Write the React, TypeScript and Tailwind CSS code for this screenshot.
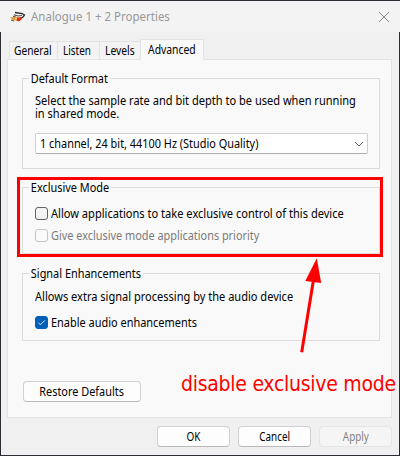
import type { ReactNode } from "react";

function Group({ title, className, titleClass, children }: { title: string; className: string; titleClass: string; children: ReactNode }) {
  return (
    <section className={`relative w-[358px] border border-[#dcdcdc] ${className}`}>
      <h2 className={`absolute -top-[8px] left-[6px] origin-left bg-[#f9f9f9] px-[2px] leading-[16px] ${titleClass}`}>{title}</h2>
      {children}
    </section>
  );
}

function Box({ className, checked }: { className: string; checked?: boolean }) {
  return (
    <span className={`flex size-[13px] shrink-0 items-center justify-center rounded-[3px] border ${className}`}>
      {checked && (
        <svg width="9" height="9" viewBox="0 0 9 9" fill="none" stroke="#d7e8f8" strokeWidth="1">
          <path d="M1.3 4.7 3.4 6.8 7.8 2.4" />
        </svg>
      )}
    </span>
  );
}

function Button({ className, textClass, children }: { className: string; textClass: string; children: ReactNode }) {
  return (
    <button className={`flex h-[21px] items-center justify-center rounded-[4px] border ${className}`}>
      <span className={textClass}>{children}</span>
    </button>
  );
}

export default function App() {
  return (
    <div className="relative flex h-[456px] w-[400px] flex-col overflow-hidden bg-[#f0f0f0] font-['Noto_Sans','Open_Sans',sans-serif] text-[12px] leading-[13px] whitespace-nowrap text-black">
      <header className="flex h-[32px] shrink-0 items-center border-t border-[#2c2a33] bg-[#f3f3f3] px-[10px]">
        <svg width="16" height="12" viewBox="0 0 16 12" fill="none">
          <path d="M5 1.5 12 2.5 14.5 4 13 6 10 8" stroke="#2d2a2a" strokeWidth="1.3" />
          <path d="M4 3.7 8 5 12 4.5" stroke="#55504c" strokeWidth="1.1" />
          <path d="M0 6.5 5 5.8 10 7 8 10 3 9Z" fill="#d79b3b" />
          <path d="M6 7 11 6 12 8 9 10.5 6 9Z" fill="#d8301f" />
          <path d="M3 5.5 6 5M1 9 4 10" stroke="#6d4a35" />
          <path d="M5 7.5 7 8" stroke="#ffe25a" strokeWidth="1.5" />
        </svg>
        <span className="ml-[5px] origin-left scale-x-[.957] text-[#999]">Analogue 1 + 2 Properties</span>
        <svg className="ml-auto" width="12" height="12" viewBox="0 0 12 12" stroke="#8a8a8a" strokeWidth="1">
          <path d="M1 1 11 11M11 1 1 11" />
        </svg>
      </header>

      <div className="flex flex-1 flex-col border-x border-b border-[#2c2a33]">
        <nav className="relative z-10 -mb-px flex h-[28px] items-end pl-[8px]">
          <span className="mb-px flex h-[18px] w-[48px] items-center border-t border-l border-[#e3e3e3] bg-[#f3f3f3] pl-[4px]">
            <span className="origin-left scale-x-[.85]">General</span>
          </span>
          <span className="mb-px flex h-[18px] w-[42px] items-center border-t border-l border-[#e3e3e3] bg-[#f3f3f3] pl-[5px]">
            <span className="origin-left scale-x-[.83]">Listen</span>
          </span>
          <span className="mb-px flex h-[18px] w-[41px] items-center border-t border-l border-[#e3e3e3] bg-[#f3f3f3] pl-[5px]">
            <span className="origin-left scale-x-[.86]">Levels</span>
          </span>
          <span className="flex h-[21px] w-[64px] items-center border-x border-t border-[#e3e3e3] bg-[#f9f9f9] pb-[2px] pl-[7px]">
            <span className="origin-left scale-x-[.865]">Advanced</span>
          </span>
        </nav>

        <main className="ml-[6px] flex h-[359px] w-[385px] flex-col border border-[#e3e3e3] bg-[#f9f9f9] pl-[14px]">
          <Group className="mt-[18px] h-[91px] pt-[15px] pl-[12px]" title="Default Format" titleClass="scale-x-[.905]">
            <p className="origin-left scale-x-[.921]">
              <span className="block">Select the sample rate and bit depth to be used when running</span>
              <span className="block">in shared mode.</span>
            </p>
            <div className="mt-[13px] flex h-[21px] w-[333px] items-center justify-between rounded-[2px] border border-[#cfcfcf] border-b-[#adadad] bg-white pr-[3px] pl-[4px]">
              <span className="origin-left scale-x-[.908]">1 channel, 24 bit, 44100 Hz (Studio Quality)</span>
              <svg width="10" height="6" viewBox="0 0 10 6" fill="none" stroke="#606060" strokeWidth="1">
                <path d="M1 1 5 5 9 1" />
              </svg>
            </div>
          </Group>

          <Group className="mt-[18px] h-[67px] pt-[19px] pl-[12px]" title="Exclusive Mode" titleClass="scale-x-[.91]">
            <label className="flex h-[13px] items-center gap-[3px]">
              <Box className="border-[#626262] bg-[#f3f3f3]" />
              <span className="origin-left scale-x-[.923]">Allow applications to take exclusive control of this device</span>
            </label>
            <label className="mt-[9px] flex h-[13px] items-center gap-[3px] text-[#7b7b7b]">
              <Box className="border-[#c5c5c5] bg-[#fafafa]" />
              <span className="origin-left scale-x-[.907]">Give exclusive mode applications priority</span>
            </label>
          </Group>

          <Group className="mt-[19px] h-[68px] pt-[16px] pl-[12px]" title="Signal Enhancements" titleClass="scale-x-[.91]">
            <p className="origin-left scale-x-[.92]">Allows extra signal processing by the audio device</p>
            <label className="mt-[13px] flex h-[13px] items-center gap-[3px]">
              <Box checked className="border-[#005fb8] bg-[#005fb8]" />
              <span className="origin-left scale-x-[.912]">Enable audio enhancements</span>
            </label>
          </Group>

          <Button className="mt-[40px] ml-px w-[118px] border-[#d0d0d0] border-b-[#b9b9b9] bg-[#fdfdfd]" textClass="scale-x-[.908]">Restore Defaults</Button>
        </main>

        <footer className="mt-[8px] flex justify-end gap-[8px] pr-[7px]">
          <Button className="w-[73px] border-[#d0d0d0] border-b-[#b9b9b9] bg-[#fdfdfd]" textClass="scale-x-[.83]">OK</Button>
          <Button className="w-[73px] border-[#d0d0d0] border-b-[#b9b9b9] bg-[#fdfdfd]" textClass="scale-x-[.82]">Cancel</Button>
          <Button className="w-[73px] border-[#e5e5e5] bg-[#f5f5f5] text-[#838383]" textClass="scale-x-[.82]">Apply</Button>
        </footer>
      </div>

      <div className="absolute top-[177px] left-[17px] z-20 h-[80px] w-[366px] border-[3px] border-[#ff0000]" />
      <svg className="absolute top-[256px] left-[295px] z-20" width="32" height="100" viewBox="0 0 32 100">
        <path d="M6.7 96.3 18.3 25" stroke="#ff0000" strokeWidth="3" />
        <path d="M21.8 2.3 10.3 25 26.2 27Z" fill="#ff0000" />
      </svg>
      <span className="absolute top-[371px] left-[181px] z-20 font-['DejaVu_Sans_Condensed','DejaVu_Sans',sans-serif] text-[21px] leading-[26px] tracking-[-0.27px] text-[#ff0000]">disable exclusive mode</span>
    </div>
  );
}
